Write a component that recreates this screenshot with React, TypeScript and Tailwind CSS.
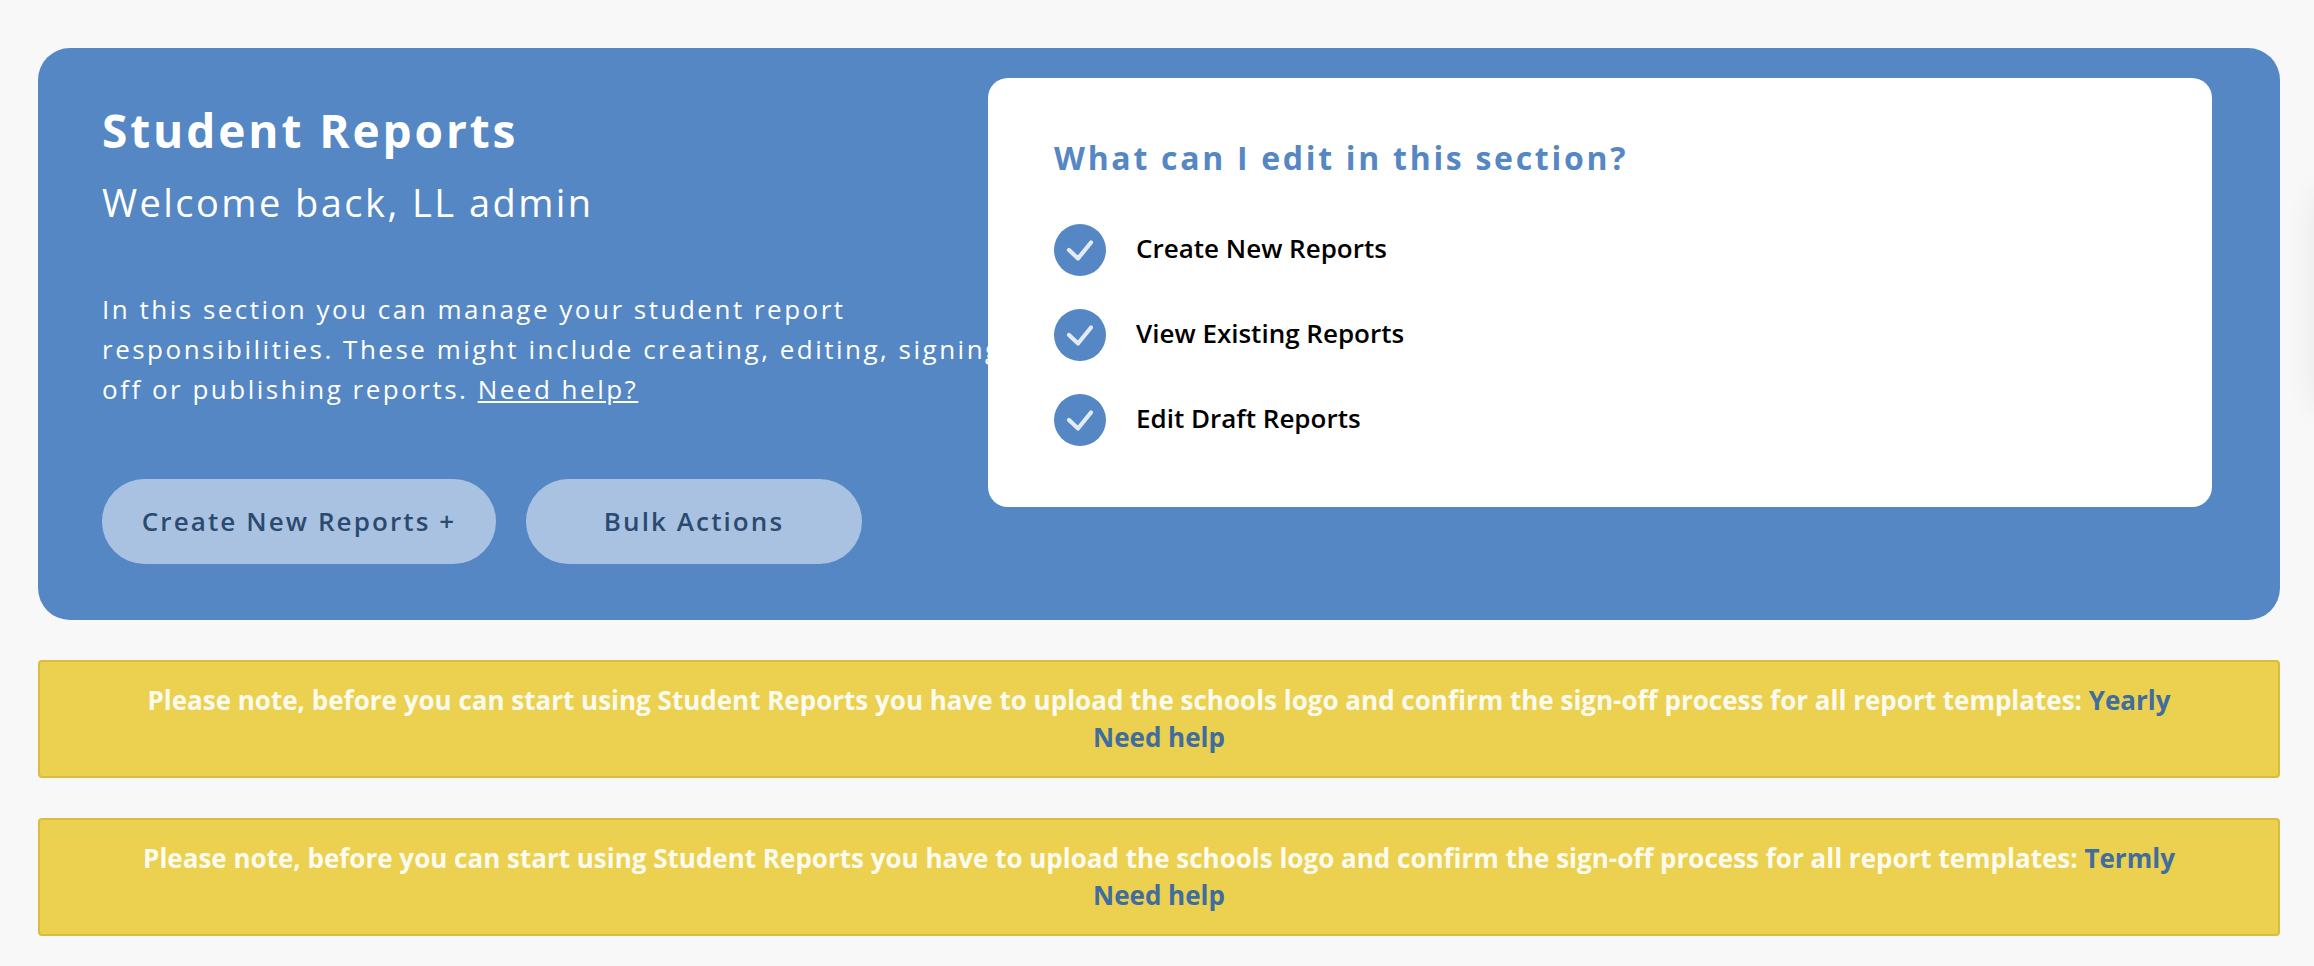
import React from "react";

const CheckBadge: React.FC = () => (
  <span className="flex h-[52px] w-[52px] shrink-0 items-center justify-center rounded-full bg-[#5587c4]">
    <svg width="52" height="52" viewBox="0 0 52 52" fill="none">
      <path d="M15 26 L24 34.5 L37 18.5" stroke="#e2ebf6" strokeWidth="4.2" strokeLinecap="round" strokeLinejoin="round" />
    </svg>
  </span>
);

const Notice: React.FC<{ period: string }> = ({ period }) => (
  <div className="flex h-[118px] flex-col items-center justify-center rounded-[4px] border-2 border-[#dcbc3e] bg-[#ebd14f] text-center text-[26px] leading-[37px] font-bold text-[#fdfbf0]">
    <p>
      Please note, before you can start using Student Reports you have to upload the schools logo and confirm the sign-off process for all report templates:{" "}
      <a href="#" className="text-[#406c9e]">{period}</a>
    </p>
    <a href="#" className="text-[#406c9e]">Need help</a>
  </div>
);

const App: React.FC = () => {
  const items = ["Create New Reports", "View Existing Reports", "Edit Draft Reports"];

  return (
    <div className="relative min-h-[966px] overflow-hidden bg-[#f8f8f8] pt-[48px] pr-[34px] pl-[38px] font-['Open_Sans',sans-serif]">
      {/* faint shadow from something just off the right edge */}
      <div className="absolute top-[190px] right-[-30px] h-[220px] w-[30px] rounded-full shadow-[0_0_30px_rgba(0,0,0,0.07)]" />

      {/* Hero */}
      <section className="flex h-[572px] rounded-[32px] bg-[#5587c4] pt-[30px] pr-[68px] pl-[64px]">
        <div className="w-[886px] shrink-0 text-white">
          <h1 className="mt-[22px] text-[46px] leading-[60px] font-bold tracking-[2.9px]">Student Reports</h1>
          <h2 className="mt-[17px] text-[38px] leading-[50px] tracking-[2.45px]">Welcome back, LL admin</h2>
          <p className="mt-[62px] w-[920px] text-[26px] leading-[40px] tracking-[2.5px]">
            In this section you can manage your student report
            <br />
            responsibilities. These might include creating, editing, signing
            <br />
            off or publishing reports. <a href="#" className="underline">Need help?</a>
          </p>
          <div className="mt-[70px] flex gap-[30px]">
            <button className="h-[85px] w-[394px] rounded-full bg-[#aac2e1] text-[26px] font-semibold tracking-[2.1px] text-[#2b4a70]">
              Create New Reports +
            </button>
            <button className="h-[85px] w-[336px] rounded-full bg-[#aac2e1] text-[26px] font-semibold tracking-[2.1px] text-[#2b4a70]">
              Bulk Actions
            </button>
          </div>
        </div>

        <div className="relative h-[429px] flex-1 rounded-[20px] bg-white pt-[58px] pl-[66px]">
          <h3 className="text-[32px] leading-[44px] font-bold tracking-[2.7px] text-[#5587c4]">What can I edit in this section?</h3>
          <ul className="mt-[44px] flex flex-col gap-[33px]">
            {items.map((item) => (
              <li key={item} className="flex items-center gap-[30px]">
                <CheckBadge />
                <span className="mb-[4px] text-[26px] leading-[36px] font-semibold text-black">{item}</span>
              </li>
            ))}
          </ul>
        </div>
      </section>

      {/* Notices */}
      <div className="mt-[40px] flex flex-col gap-[40px]">
        <Notice period="Yearly" />
        <Notice period="Termly" />
      </div>
    </div>
  );
};

export default App;
